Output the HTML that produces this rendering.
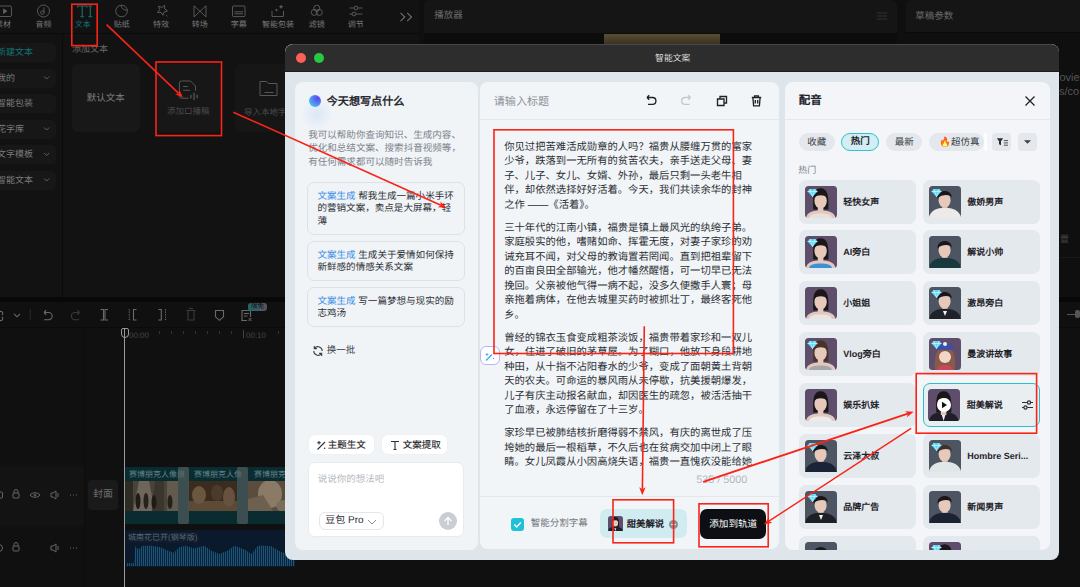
<!DOCTYPE html>
<html lang="zh-CN"><head><meta charset="utf-8">
<style>
*{box-sizing:border-box;margin:0;padding:0}
body{width:1080px;height:587px;overflow:hidden;background:#0f0f0f;position:relative;font-family:"Liberation Sans",sans-serif;text-rendering:geometricPrecision}
.a{position:absolute}
.bgt{color:#6e6e6e;font-size:9px;white-space:nowrap}
.tb{position:absolute;top:18.5px;font-size:8px;line-height:12px;color:#7a7a7a;transform:translateX(-50%);white-space:nowrap}
.sb{position:absolute;left:0;width:56px;height:19px;background:#171717;border-radius:0 5px 5px 0;font-size:9px;color:#7c7c7c;line-height:19px;white-space:nowrap;text-indent:-3px;overflow:hidden}
.sb i{position:absolute;right:9px;top:0;font-style:normal;font-size:8px}
.sug{left:22px;width:158px;border:1px solid #dde1e6;border-radius:7px;padding:7.8px 0 0 9.3px;font-size:9.55px;line-height:12.6px;color:#2b2f36;white-space:nowrap}
.bl{color:#3a8ee6}
.chip{height:19px;background:#fff;border-radius:6px;font-size:9.5px;color:#1f2329;-webkit-text-stroke:.12px #1f2329;box-shadow:0 0 2px rgba(0,0,0,.04)}
.chip span{position:absolute;top:5px;line-height:12px;white-space:nowrap}
.txt{width:252px;font-size:10.34px;line-height:14.5px;color:#2b2f36}
.txt p{margin-bottom:8.6px}
.pill{top:50.5px;height:18.3px;background:#e4e8ec;border-radius:9px;font-size:9.5px;color:#3a3f47;text-align:center;line-height:19.8px;white-space:nowrap}
.card{width:117.3px;height:44px;background:#e4e9ed;border-radius:7px}
.card.sel{background:#e9eef1;border:1.5px solid #26c0d0}
.card .av{position:absolute;left:6px;top:6px;width:32px;height:32px}
.card.sel .av{left:4.5px;top:4.5px}
.nm{position:absolute;left:44.6px;top:16px;font-size:9px;font-weight:bold;color:#1f2329;line-height:12px;white-space:nowrap}
.card.sel .nm{left:43.1px;top:14.5px}
</style></head><body>
<!-- ============ BACKGROUND APP ============ -->
<div class="a" style="left:0;top:0;width:419px;height:297px;background:#121212"></div>
<div class="a" style="left:0;top:33px;width:419px;height:1px;background:#0a0a0a"></div>
<div class="a" style="left:62px;top:34px;width:1px;height:263px;background:#0b0b0b"></div>
<div class="a" style="left:424px;top:0;width:473px;height:33px;background:#151515;border-radius:6px 6px 0 0"></div>
<div class="a" style="left:424px;top:33px;width:473px;height:11px;background:#0c0c0c"></div>
<div class="a" style="left:906px;top:0;width:174px;height:297px;background:#0f0f0f;border-radius:6px 0 0 0"></div>
<div class="a" style="left:906px;top:0;width:174px;height:32px;background:#151515;border-radius:6px 0 0 0"></div>
<div class="a" style="left:906px;top:32px;width:174px;height:1px;background:#0a0a0a"></div>
<div class="a" style="left:604px;top:34px;width:116px;height:10px;background:linear-gradient(#5a4d33,#3a3222)"></div>
<!-- toolbar labels -->
<div class="tb" style="left:3px">素材</div>
<div class="tb" style="left:43.6px">音频</div>
<div class="tb" style="left:82.8px;color:#137178">文本</div>
<div class="tb" style="left:121.7px">贴纸</div>
<div class="tb" style="left:161px">特效</div>
<div class="tb" style="left:199.8px">转场</div>
<div class="tb" style="left:238.7px">字幕</div>
<div class="tb" style="left:277.9px">智能包装</div>
<div class="tb" style="left:316.8px">滤镜</div>
<div class="tb" style="left:355.7px">调节</div>
<svg class="a" style="left:0;top:0" width="420" height="26" fill="none" stroke="#606060" stroke-width="0.9">
  <rect x="-2" y="6" width="13.5" height="10.5" rx="1.5"/><path d="M3.5 9l3.5 2.2-3.5 2.2z" fill="#606060"/>
  <circle cx="43.5" cy="11" r="6"/><circle cx="42.3" cy="12.6" r="1.7"/><path d="M44 12.6V7.3"/>
  <path d="M77.5 7.5V6h9.5v1.5M82.2 6v10.8M80.3 16.8h3.8M88.3 6h4M90.3 6v10.8M88.3 16.8h4" stroke="#137178" stroke-width="1.1"/>
  <path d="M127.3 10.2A5.8 5.8 0 1 1 121.2 5.2M121.2 5.2c0 3 2.5 5 6.1 5M121.2 5.2a5.8 5.8 0 0 1 6.1 5"/>
  <path d="M158.5 6.2l3.3 1.2 2.8-2 .1 3.5 2.8 2.1-3.4 1 -1.1 3.3-2-2.9-3.5.1 2.1-2.8z"/><path d="M166.2 15l1.3 1.3"/>
  <path d="M194 5.8L206 16.9V5.8L194 16.9z"/>
  <rect x="232.5" y="6" width="12.5" height="10.6" rx="1"/><path d="M234.5 11.8h8.5M234.5 13.8h8.5"/>
  <path d="M272 11v5.5h11.5V11"/><path d="M281 4.5l.7 1.6 1.6.7-1.6.7-.7 1.6-.7-1.6-1.6-.7 1.6-.7zM276.5 8.5l.5 1.1 1.1.5-1.1.5-.5 1.1-.5-1.1-1.1-.5 1.1-.5z" fill="#606060" stroke="none"/>
  <circle cx="316.8" cy="8.2" r="3"/><circle cx="314.3" cy="12.4" r="3"/><circle cx="319.3" cy="12.4" r="3"/>
  <path d="M349.5 8h4.5M358 8h4.5M349.5 14h2.5M356 14h6.5"/><circle cx="356" cy="8" r="1.9"/><circle cx="354" cy="14" r="1.9"/>
  <path d="M400.5 12.8l4.3 4.2-4.3 4.2M407.2 12.8l4.3 4.2-4.3 4.2" stroke="#6e6e6e" stroke-width="1.1"/>
</svg>
<!-- sidebar -->
<div class="sb" style="top:43px;color:#137178">新建文本</div>
<div class="sb" style="top:68.5px">我的</div>
<div class="sb" style="top:94px">智能包装</div>
<div class="sb" style="top:119.5px">花字库</div>
<div class="sb" style="top:145px">文字模板</div>
<div class="sb" style="top:170.5px">智能文本</div>
<svg class="a" style="left:43px;top:74px" width="8" height="120" fill="none" stroke="#6a6a6a" stroke-width="0.9"><path d="M1.2 2.5l2.5 2.5 2.5-2.5M1.2 53.5l2.5 2.5 2.5-2.5M1.2 79l2.5 2.5 2.5-2.5M1.2 104.5l2.5 2.5 2.5-2.5"/></svg>
<div class="a bgt" style="left:72px;top:41.5px;font-size:9px;color:#6a6a6a">添加文本</div>
<div class="a" style="left:72px;top:64px;width:67.5px;height:68px;background:#181818;border-radius:6px"></div>
<div class="a bgt" style="left:72px;top:90px;width:67.5px;text-align:center;font-size:9.5px;color:#7e7e7e">默认文本</div>
<div class="a" style="left:155.5px;top:64px;width:65.5px;height:68px;background:#171717;border-radius:6px"></div>
<div class="a bgt" style="left:155.5px;top:104.7px;width:65.5px;text-align:center;font-size:8.5px;color:#4a4a4a">添加口播稿</div>
<div class="a" style="left:234.5px;top:64px;width:60px;height:68px;background:#161616;border-radius:6px"></div>
<div class="a bgt" style="left:244px;top:105.5px;font-size:8.5px;color:#4a4a4a">导入本地字幕</div>
<svg class="a" style="left:150px;top:75px" width="140" height="30" fill="none" stroke="#575757" stroke-width="1">
  <path d="M38.7 23.2H31.4a2 2 0 0 1-2-2V8a2 2 0 0 1 2-2H40.5L45.5 11V15.7M33.2 11.5h4.7M33.2 15.3h6.8"/><path d="M40.9 19.8v3.4M44 17.8v7.3M47.1 19.8v3.4" stroke-width="1.3"/>
  <path d="M110 6.5h6.5l2 2h8.5v12h-17zM114.5 17.5h9"/>
</svg>
<!-- timeline -->
<div class="a" style="left:0;top:297px;width:1080px;height:5px;background:#080808"></div>
<div class="a" style="left:0;top:302px;width:1080px;height:285px;background:#101010"></div>
<div class="a" style="left:0;top:327px;width:1080px;height:1px;background:#0b0b0b"></div>
<div class="a" style="left:84px;top:328px;width:1px;height:259px;background:#0c0c0c"></div>
<div class="a" style="left:0;top:466px;width:84px;height:60px;background:#131313"></div>
<svg class="a" style="left:0;top:302px" width="290" height="26" fill="none" stroke="#6a6a6a" stroke-width="1.1">
  <path d="M-1 10.5a2 2 0 1 1 3 2.5M-1 17.5a2 2 0 1 0 3-2.5"/>
  <path d="M14 11.8l3 3 3-3"/><path d="M30.3 6.7v11.6" stroke="#262626"/>
  <path d="M44 10.5h4.6a3.6 3.6 0 0 1 0 7.2h-4.4M44 10.5l2.2-2.3M44 10.5l2.2 2.3"/>
  <path d="M79.5 10.5h-4.6a3.6 3.6 0 0 0 0 7.2h4.4M79.5 10.5l-2.2-2.3M79.5 10.5l-2.2 2.3" stroke="#3a3a3a"/>
  <path d="M100.5 7.5h3v10.5h-3M108 7.5h-3v10.5h3"/>
  <path d="M129.3 7.2v11.5" stroke-dasharray="1.2 1.2"/><path d="M136.5 7.5h-3v10.5h3"/>
  <path d="M158.3 7.5h3v10.5h-3"/><path d="M165.5 7.2v11.5" stroke-dasharray="1.2 1.2"/>
  <path d="M186.5 8.5h9M188 8.5v9.5h6V8.5M189 6.5h4" stroke="#3c3c3c"/>
  <path d="M215.5 8.5h8v6.3l-4 3.5-4-3.5z"/>
  <path d="M250.5 15V8.5h-8.5v10h5M244 11.5h5M244 14h3.5"/><path d="M248.5 16l3 3M251.5 16l-3 3" stroke-width="1"/>
</svg>
<div class="a" style="left:248px;top:302.5px;width:19px;height:8px;border-radius:3px;background:linear-gradient(90deg,#1f6670,#5b5060);font-size:6.5px;color:#111;line-height:8px;text-align:center">限免</div>
<div class="a" style="left:124px;top:328px;width:1px;height:259px;background:#9a9a9a"></div>
<div class="a" style="left:120.5px;top:328px;width:8px;height:10px;border:1.2px solid #9a9a9a;border-radius:2px 2px 4px 4px"></div>
<div class="a bgt" style="left:129px;top:330.5px;font-size:8px;color:#474747">00:00</div>
<svg class="a" style="left:150px;top:329px" width="140" height="8" stroke="#333" stroke-width="1"><path d="M9.5 2v3M21.5 2v3M33.5 2v3M45.5 2v3M57.5 2v3M69.5 2v3M81.5 2v3M128.5 2v3"/></svg>
<div class="a bgt" style="left:246px;top:330.5px;font-size:8px;color:#474747">00:10</div>
<div class="a" style="left:243px;top:330px;width:1px;height:8px;background:#444"></div>
<!-- track header icons -->
<svg class="a" style="left:0;top:485px" width="90" height="75" fill="none" stroke="#666" stroke-width="1">
  <rect x="-5" y="7" width="7.5" height="6" rx="1"/><circle cx="-1" cy="63" r="3.5"/>
  <rect x="13" y="8" width="6" height="5" rx="1"/><path d="M14 8V6.5a2 2 0 0 1 4 0V8"/>
  <path d="M30 10c2-3 8-3 10 0-2 3-8 3-10 0z"/><circle cx="35" cy="10" r="1"/>
  <path d="M51 8h2l3-2v8l-3-2h-2z M58 8v4"/>
  <path d="M70 10h1M73 10h1M76 10h1"/>
  <rect x="13" y="61" width="6" height="5" rx="1"/><path d="M14 61v-1.5a2 2 0 0 1 4 0V61"/>
  <path d="M51 61h2l3-2v8l-3-2h-2z M58 61v4"/>
  <path d="M70 63h1M73 63h1M76 63h1"/>
</svg>
<div class="a" style="left:88px;top:480px;width:30px;height:30px;background:#1a1a1a;border-radius:4px;color:#6e6e6e;font-size:10px;line-height:30px;text-align:center">封面</div>
<!-- video track -->
<div class="a" style="left:125px;top:467px;width:170px;height:57px;background:#0a2c31"></div>
<svg class="a" style="left:125px;top:481px" width="170" height="30">
  <rect width="53" height="30" fill="#4a4338"/>
  <path d="M0 0h8v30H0z" fill="#2e2a24"/><path d="M14 0h10l6 30H8z" fill="#6e665a"/><path d="M30 0h9v30h-12z" fill="#3a352d"/><path d="M42 0h11v30H42z" fill="#625a4e"/>
  <ellipse cx="13" cy="20" rx="2.5" ry="8" fill="#1f1c18"/><ellipse cx="21" cy="20" rx="2.5" ry="8" fill="#26221d"/><ellipse cx="29" cy="21" rx="2.5" ry="7" fill="#1e1b17"/><ellipse cx="45" cy="21" rx="2.5" ry="7" fill="#24211c"/>
  <rect x="63" width="49" height="30" fill="#3a2c1f"/>
  <path d="M63 20h49v10H63z" fill="#5c4a36"/><ellipse cx="74" cy="14" rx="7" ry="9" fill="#6b5640"/><ellipse cx="92" cy="12" rx="6" ry="8" fill="#4b3b2b"/><ellipse cx="104" cy="16" rx="6" ry="10" fill="#66523e"/>
  <rect x="123" width="47" height="30" fill="#5a4d3e"/>
  <ellipse cx="145" cy="13" rx="12" ry="14" fill="#8a7a66"/><path d="M123 18l15-4 10 16h-25z" fill="#6e604e"/><ellipse cx="160" cy="25" rx="9" ry="6" fill="#7a6d5b"/>
</svg>
<div class="a" style="left:178px;top:467px;width:10.5px;height:56.5px;background:rgba(70,84,86,.75);border-radius:2px"></div>
<div class="a" style="left:237px;top:467px;width:11px;height:56.5px;background:rgba(70,84,86,.75);border-radius:2px"></div>
<div class="a bgt" style="left:129px;top:468.5px;font-size:8px;color:#5f8287">赛博朋克人像摄</div>
<div class="a bgt" style="left:194px;top:468.5px;font-size:8px;color:#5f8287">赛博朋克人像</div>
<div class="a bgt" style="left:254px;top:468.5px;font-size:8px;color:#5f8287">赛博朋克</div>
<div class="a" style="left:178px;top:467px;width:10.5px;height:56.5px;background:rgba(70,84,86,.45);border-radius:2px"></div>
<div class="a" style="left:237px;top:467px;width:11px;height:56.5px;background:rgba(70,84,86,.45);border-radius:2px"></div>
<div class="a" style="left:125px;top:530px;width:170px;height:36.5px;background:#0a1a2c"></div>
<div class="a" style="left:126.5px;top:532px;width:72.5px;height:10.5px;background:#101c2b;border-radius:2px"></div>
<div class="a bgt" style="left:128px;top:531.5px;font-size:8px;line-height:12px;color:#5c6876">城南花已开(钢琴版)</div>
<div class="a" style="left:127px;top:544px;width:168px;height:22px;background:repeating-linear-gradient(90deg,#1a5478 0 1px,#0d2236 1px 2px);clip-path:polygon(0 100%,0 88%,4% 88%,5% 10%,7% 25%,9% 8%,15% 8%,20% 15%,24% 30%,28% 40%,31% 15%,35% 8%,40% 20%,46% 8%,50% 30%,55% 45%,60% 30%,64% 8%,70% 25%,74% 45%,78% 8%,82% 8%,86% 10%,90% 30%,95% 45%,100% 20%,100% 100%)"></div>
<!-- right misc -->
<div class="a bgt" style="left:1059.5px;top:72px;font-size:11px;line-height:13px;color:#555">ovies</div>
<div class="a bgt" style="left:1059px;top:86px;font-size:11px;line-height:13px;color:#555">s/co</div>
<div class="a bgt" style="left:1060px;top:232px;font-size:9px;color:#444">置</div>
<div class="a" style="left:1060px;top:257px;width:20px;height:1px;background:#181818"></div>
<div class="a" style="left:1060px;top:297px;width:20px;height:1px;background:#080808"></div>
<div class="a" style="left:1067px;top:313.5px;width:13px;height:1px;background:#555"></div>
<div class="a" style="left:1075px;top:310px;width:5px;height:8px;background:#555;border-radius:2px"></div>
<div class="a bgt" style="left:434.3px;top:8px;font-size:9.5px;line-height:15px;color:#6a6a6a">播放器</div>
<div class="a bgt" style="left:915.3px;top:8.5px;font-size:9.5px;line-height:15px;color:#6a6a6a">草稿参数</div>
<svg class="a" style="left:876px;top:11px" width="12" height="10" stroke="#333" stroke-width="1"><path d="M1 2h10M1 5h10M1 8h10"/></svg>

<!-- ============ DIALOG ============ -->
<div id="dlg" class="a" style="left:285.2px;top:44px;width:774.3px;height:516px;border-radius:8px;background:#dfe6eb;overflow:hidden">
  <div class="a" style="left:0;top:0;width:775px;height:28px;background:#2d2d2d;border-bottom:1px solid #1c1c1c;border-top:1px solid #474747;border-radius:8px 8px 0 0"></div>
  <div class="a" style="left:11px;top:9px;width:10px;height:10px;border-radius:50%;background:#fe5f57"></div>
  <div class="a" style="left:28.5px;top:9px;width:10px;height:10px;border-radius:50%;background:#28c840"></div>
  <div class="a" style="left:0;top:7.5px;width:775px;text-align:center;color:#dcdcdc;font-size:8.8px;line-height:12px">智能文案</div>



  <!-- RIGHT PANEL -->
  <div class="a" style="left:500px;top:38px;width:265px;height:468px;background:#f3f5f8;border-radius:8px;overflow:hidden">
    <div class="a" style="left:13.5px;top:11.5px;font-size:11.5px;font-weight:bold;color:#1f2329;line-height:14px;white-space:nowrap">配音</div>
    <svg class="a" style="left:239px;top:12.5px" width="12" height="12" fill="none" stroke="#1f2329" stroke-width="1.3"><path d="M1.5 1.5l9 9M10.5 1.5l-9 9"/></svg>
    <div class="a" style="left:0;top:36.5px;width:265px;height:1px;background:#e4e8ec"></div>
    <div class="a pill" style="left:13.5px;width:36px">收藏</div>
    <div class="a pill" style="left:56px;width:38px;background:#d3eef2;border:1.2px solid #2cc3cf;line-height:16px;font-weight:bold;color:#1f2329">热门</div>
    <div class="a pill" style="left:101px;width:36px">最新</div>
    <div class="a pill" style="left:144px;width:55px;padding-left:10px;text-align:left">🔥超仿真</div>
    <div class="a" style="left:198.5px;top:50.5px;width:3px;height:18.3px;background:linear-gradient(90deg,rgba(255,255,255,.6),#fff)"></div>
    <div class="a pill" style="left:207px;width:19px;border-radius:4px"></div>
    <svg class="a" style="left:210px;top:54px" width="16" height="12"><path d="M1.8 2.2h6.4L6 5.3v3.9L4 8.2V5.3z" fill="#2b2f36"/><path d="M8.8 4.6h4.2M8.8 6.9h4.2M8.8 9.2h4.2" stroke="#2b2f36" stroke-width=".8"/></svg>
    <div class="a pill" style="left:233px;width:18.5px;border-radius:4px"></div>
    <svg class="a" style="left:238px;top:57px" width="9" height="6"><path d="M1 1.2h7L4.5 4.8z" fill="#3a3f47"/></svg>
    <div class="a" style="left:13px;top:81.5px;font-size:9px;color:#7b8088;line-height:12px;white-space:nowrap">热门</div>
    <div class="a card" style="left:13.4px;top:97.5px"><div class="av"><svg width="32" height="32" viewBox="0 0 32 32"><rect width="32" height="32" rx="3.5" fill="#5e4e6c"/><path d="M8.3 23.5 C7.5 10 8.5 2.2 15.6 2.2 C22.7 2.2 24 10 23.3 23.5z" fill="#1b1719"/><path d="M1 32 C2 26 8 24.5 15.6 24.5 C23.2 24.5 29.5 26 30.5 32z" fill="#e2c9bd"/><path d="M4 32 C5 28.5 9 27.5 15.6 27.5 C22 27.5 26 28.5 27 32z" fill="#e8e0dc"/><path d="M12.8 19h5.6v7h-5.6z" fill="#e4c8bb"/><ellipse cx="15.6" cy="14.8" rx="6.2" ry="7.6" fill="#e6c9bb"/><path d="M9.5 11.5 C10 5 21 5 21.8 11.5 C19 8.5 12.5 8.5 9.5 11.5z" fill="#1b1719"/><path d="M2.5 5.5l2.2-2.5h5.6l2.2 2.5-5 5.2z" fill="#58d6f5"/><path d="M2.5 5.5h10M4.7 3l2.8 7.7L10.3 3" stroke="#e8fbff" stroke-width=".6" fill="none"/></svg></div><div class="nm">轻快女声</div></div>
    <div class="a card" style="left:137.4px;top:97.5px"><div class="av"><svg width="32" height="32" viewBox="0 0 32 32"><rect width="32" height="32" rx="3.5" fill="#4d5562"/><path d="M13.2 18h5.4v6h-5.4z" fill="#cfae98"/><path d="M0 32 C1 24.5 8 21.8 15.8 21.8 C23.6 21.8 31 24.5 32 32z" fill="#ecebea"/><ellipse cx="15.6" cy="14.2" rx="6" ry="7.6" fill="#e6c9bb"/><path d="M8.6 12.5 C7.5 3.5 22.5 2 22.8 11.5 C21 8.3 13 8 8.6 12.5z" fill="#1b1719"/><path d="M2.5 5.5l2.2-2.5h5.6l2.2 2.5-5 5.2z" fill="#58d6f5"/><path d="M2.5 5.5h10M4.7 3l2.8 7.7L10.3 3" stroke="#e8fbff" stroke-width=".6" fill="none"/></svg></div><div class="nm">傲娇男声</div></div>
    <div class="a card" style="left:13.4px;top:148.4px"><div class="av"><svg width="32" height="32" viewBox="0 0 32 32"><rect width="32" height="32" rx="3.5" fill="#5e4e6c"/><path d="M8.3 23.5 C7.5 10 8.5 2.2 15.6 2.2 C22.7 2.2 24 10 23.3 23.5z" fill="#1b1719"/><path d="M1 32 C2 26 8 24.5 15.6 24.5 C23.2 24.5 29.5 26 30.5 32z" fill="#e2c9bd"/><path d="M4 32 C5 28.5 9 27.5 15.6 27.5 C22 27.5 26 28.5 27 32z" fill="#3d8fd6"/><path d="M12.8 19h5.6v7h-5.6z" fill="#e4c8bb"/><ellipse cx="15.6" cy="14.8" rx="6.2" ry="7.6" fill="#e6c9bb"/><path d="M9.5 11.5 C10 5 21 5 21.8 11.5 C19 8.5 12.5 8.5 9.5 11.5z" fill="#1b1719"/><path d="M2.5 5.5l2.2-2.5h5.6l2.2 2.5-5 5.2z" fill="#58d6f5"/><path d="M2.5 5.5h10M4.7 3l2.8 7.7L10.3 3" stroke="#e8fbff" stroke-width=".6" fill="none"/></svg></div><div class="nm">AI旁白</div></div>
    <div class="a card" style="left:137.4px;top:148.4px"><div class="av"><svg width="32" height="32" viewBox="0 0 32 32"><rect width="32" height="32" rx="3.5" fill="#4d5562"/><path d="M13.2 18h5.4v6h-5.4z" fill="#cfae98"/><path d="M0 32 C1 24.5 8 21.8 15.8 21.8 C23.6 21.8 31 24.5 32 32z" fill="#183a3c"/><ellipse cx="15.6" cy="14.2" rx="6" ry="7.6" fill="#e6c9bb"/><path d="M8.6 12.5 C7.5 3.5 22.5 2 22.8 11.5 C21 8.3 13 8 8.6 12.5z" fill="#1b1719"/></svg></div><div class="nm">解说小帅</div></div>
    <div class="a card" style="left:13.4px;top:199.3px"><div class="av"><svg width="32" height="32" viewBox="0 0 32 32"><rect width="32" height="32" rx="3.5" fill="#5e4e6c"/><path d="M8.3 23.5 C7.5 10 8.5 2.2 15.6 2.2 C22.7 2.2 24 10 23.3 23.5z" fill="#1b1719"/><path d="M1 32 C2 26 8 24.5 15.6 24.5 C23.2 24.5 29.5 26 30.5 32z" fill="#e2c9bd"/><path d="M4 32 C5 28.5 9 27.5 15.6 27.5 C22 27.5 26 28.5 27 32z" fill="#ece4e0"/><path d="M12.8 19h5.6v7h-5.6z" fill="#e4c8bb"/><ellipse cx="15.6" cy="14.8" rx="6.2" ry="7.6" fill="#e6c9bb"/><path d="M9.5 11.5 C10 5 21 5 21.8 11.5 C19 8.5 12.5 8.5 9.5 11.5z" fill="#1b1719"/></svg></div><div class="nm">小姐姐</div></div>
    <div class="a card" style="left:137.4px;top:199.3px"><div class="av"><svg width="32" height="32" viewBox="0 0 32 32"><rect width="32" height="32" rx="3.5" fill="#4d5562"/><path d="M13.2 18h5.4v6h-5.4z" fill="#cfae98"/><path d="M0 32 C1 24.5 8 21.8 15.8 21.8 C23.6 21.8 31 24.5 32 32z" fill="#1f2228"/><ellipse cx="15.6" cy="14.2" rx="6" ry="7.6" fill="#e6c9bb"/><path d="M8.6 12.5 C7.5 3.5 22.5 2 22.8 11.5 C21 8.3 13 8 8.6 12.5z" fill="#1b1719"/><path d="M14 24l2 5 2-5z" fill="#f5f5f5"/><path d="M2.5 5.5l2.2-2.5h5.6l2.2 2.5-5 5.2z" fill="#58d6f5"/><path d="M2.5 5.5h10M4.7 3l2.8 7.7L10.3 3" stroke="#e8fbff" stroke-width=".6" fill="none"/></svg></div><div class="nm">激昂旁白</div></div>
    <div class="a card" style="left:13.4px;top:250.2px"><div class="av"><svg width="32" height="32" viewBox="0 0 32 32"><rect width="32" height="32" rx="3.5" fill="#5e4e6c"/><path d="M8.3 23.5 C7.5 10 8.5 2.2 15.6 2.2 C22.7 2.2 24 10 23.3 23.5z" fill="#4a3326"/><path d="M1 32 C2 26 8 24.5 15.6 24.5 C23.2 24.5 29.5 26 30.5 32z" fill="#e2c9bd"/><path d="M4 32 C5 28.5 9 27.5 15.6 27.5 C22 27.5 26 28.5 27 32z" fill="#a9a6a8"/><path d="M12.8 19h5.6v7h-5.6z" fill="#e4c8bb"/><ellipse cx="15.6" cy="14.8" rx="6.2" ry="7.6" fill="#e6c9bb"/><path d="M9.5 11.5 C10 5 21 5 21.8 11.5 C19 8.5 12.5 8.5 9.5 11.5z" fill="#4a3326"/><path d="M2.5 5.5l2.2-2.5h5.6l2.2 2.5-5 5.2z" fill="#58d6f5"/><path d="M2.5 5.5h10M4.7 3l2.8 7.7L10.3 3" stroke="#e8fbff" stroke-width=".6" fill="none"/></svg></div><div class="nm">Vlog旁白</div></div>
    <div class="a card" style="left:137.4px;top:250.2px"><div class="av"><svg width="32" height="32" viewBox="0 0 32 32"><rect width="32" height="32" rx="3.5" fill="#5e4e6c"/><path d="M6 32 C5 14 9 9 16 9 C23 9 27 14 26 32z" fill="#8a5a48"/><ellipse cx="16" cy="19" rx="6" ry="6" fill="#f2d6c8"/><path d="M7 12 C8 3 24 3 25 12z" fill="#3d4fa8"/><circle cx="16" cy="6" r="2" fill="#eef"/><path d="M8 32 C9 28 12 27 16 27 C20 27 23 28 24 32z" fill="#c8475a"/><path d="M2.5 5.5l2.2-2.5h5.6l2.2 2.5-5 5.2z" fill="#58d6f5"/><path d="M2.5 5.5h10M4.7 3l2.8 7.7L10.3 3" stroke="#e8fbff" stroke-width=".6" fill="none"/></svg></div><div class="nm">曼波讲故事</div></div>
    <div class="a card" style="left:13.4px;top:301.4px"><div class="av"><svg width="32" height="32" viewBox="0 0 32 32"><rect width="32" height="32" rx="3.5" fill="#5e4e6c"/><path d="M8.3 23.5 C7.5 10 8.5 2.2 15.6 2.2 C22.7 2.2 24 10 23.3 23.5z" fill="#1b1719"/><path d="M1 32 C2 26 8 24.5 15.6 24.5 C23.2 24.5 29.5 26 30.5 32z" fill="#e2c9bd"/><path d="M4 32 C5 28.5 9 27.5 15.6 27.5 C22 27.5 26 28.5 27 32z" fill="#f0ebe8"/><path d="M12.8 19h5.6v7h-5.6z" fill="#e4c8bb"/><ellipse cx="15.6" cy="14.8" rx="6.2" ry="7.6" fill="#e6c9bb"/><path d="M9.5 11.5 C10 5 21 5 21.8 11.5 C19 8.5 12.5 8.5 9.5 11.5z" fill="#1b1719"/></svg></div><div class="nm">娱乐扒妹</div></div>
    <div class="a card sel" style="left:137.4px;top:301.4px"><div class="av"><svg width="32" height="32" viewBox="0 0 32 32"><rect width="32" height="32" rx="3.5" fill="#5e4e6c"/><path d="M8.3 23.5 C7.5 10 8.5 2.2 15.6 2.2 C22.7 2.2 24 10 23.3 23.5z" fill="#1b1719"/><path d="M1 32 C2 25 8 23 15.6 23 C23.2 23 29.5 25 30.5 32z" fill="#1d1f2a"/><path d="M13.4 24.5l2.2 7.5 2.2-7.5z" fill="#f0f0f0"/><path d="M12.8 19h5.6v7h-5.6z" fill="#e4c8bb"/><ellipse cx="15.6" cy="14.8" rx="6.2" ry="7.6" fill="#e6c9bb"/><path d="M9.5 11.5 C10 5 21 5 21.8 11.5 C19 8.5 12.5 8.5 9.5 11.5z" fill="#1b1719"/><circle cx="16" cy="16" r="7" fill="#fff"/><path d="M14 12.8v6.4l5-3.2z" fill="#111"/></svg></div><div class="nm">甜美解说</div><svg class="a" style="left:97px;top:15px" width="13" height="12" fill="none" stroke="#2b2f36" stroke-width="1.2"><path d="M1 3.5h11M1 8.5h11"/><circle cx="8" cy="3.5" r="1.6" fill="#e9eef1"/><circle cx="4.5" cy="8.5" r="1.6" fill="#e9eef1"/></svg></div>
    <div class="a card" style="left:13.4px;top:352.4px"><div class="av"><svg width="32" height="32" viewBox="0 0 32 32"><rect width="32" height="32" rx="3.5" fill="#4d5562"/><path d="M13.2 18h5.4v6h-5.4z" fill="#cfae98"/><path d="M0 32 C1 24.5 8 21.8 15.8 21.8 C23.6 21.8 31 24.5 32 32z" fill="#1a2436"/><ellipse cx="15.6" cy="14.2" rx="6" ry="7.6" fill="#e6c9bb"/><path d="M8.6 12.5 C7.5 3.5 22.5 2 22.8 11.5 C21 8.3 13 8 8.6 12.5z" fill="#1b1719"/><path d="M2.5 5.5l2.2-2.5h5.6l2.2 2.5-5 5.2z" fill="#58d6f5"/><path d="M2.5 5.5h10M4.7 3l2.8 7.7L10.3 3" stroke="#e8fbff" stroke-width=".6" fill="none"/></svg></div><div class="nm">云泽大叔</div></div>
    <div class="a card" style="left:137.4px;top:352.4px"><div class="av"><svg width="32" height="32" viewBox="0 0 32 32"><rect width="32" height="32" rx="3.5" fill="#4d5562"/><path d="M13.2 18h5.4v6h-5.4z" fill="#cfae98"/><path d="M0 32 C1 24.5 8 21.8 15.8 21.8 C23.6 21.8 31 24.5 32 32z" fill="#dfe8e6"/><ellipse cx="15.6" cy="14.2" rx="6" ry="7.6" fill="#e6c9bb"/><path d="M8.6 12.5 C7.5 3.5 22.5 2 22.8 11.5 C21 8.3 13 8 8.6 12.5z" fill="#3b3129"/><path d="M2.5 5.5l2.2-2.5h5.6l2.2 2.5-5 5.2z" fill="#58d6f5"/><path d="M2.5 5.5h10M4.7 3l2.8 7.7L10.3 3" stroke="#e8fbff" stroke-width=".6" fill="none"/></svg></div><div class="nm">Hombre Seri...</div></div>
    <div class="a card" style="left:13.4px;top:403.3px"><div class="av"><svg width="32" height="32" viewBox="0 0 32 32"><rect width="32" height="32" rx="3.5" fill="#4d5562"/><path d="M13.2 18h5.4v6h-5.4z" fill="#cfae98"/><path d="M0 32 C1 24.5 8 21.8 15.8 21.8 C23.6 21.8 31 24.5 32 32z" fill="#1e2027"/><ellipse cx="15.6" cy="14.2" rx="6" ry="7.6" fill="#e6c9bb"/><path d="M8.6 12.5 C7.5 3.5 22.5 2 22.8 11.5 C21 8.3 13 8 8.6 12.5z" fill="#1b1719"/><path d="M14 24l2 5 2-5z" fill="#f5f5f5"/><path d="M2.5 5.5l2.2-2.5h5.6l2.2 2.5-5 5.2z" fill="#58d6f5"/><path d="M2.5 5.5h10M4.7 3l2.8 7.7L10.3 3" stroke="#e8fbff" stroke-width=".6" fill="none"/></svg></div><div class="nm">品牌广告</div></div>
    <div class="a card" style="left:137.4px;top:403.3px"><div class="av"><svg width="32" height="32" viewBox="0 0 32 32"><rect width="32" height="32" rx="3.5" fill="#4d5562"/><path d="M13.2 18h5.4v6h-5.4z" fill="#cfae98"/><path d="M0 32 C1 24.5 8 21.8 15.8 21.8 C23.6 21.8 31 24.5 32 32z" fill="#1b2333"/><ellipse cx="15.6" cy="14.2" rx="6" ry="7.6" fill="#e6c9bb"/><path d="M8.6 12.5 C7.5 3.5 22.5 2 22.8 11.5 C21 8.3 13 8 8.6 12.5z" fill="#1b1719"/></svg></div><div class="nm">新闻男声</div></div>
    <div class="a card" style="left:13.4px;top:454.1px"><div class="av"><svg width="32" height="32" viewBox="0 0 32 32"><rect width="32" height="32" rx="3.5" fill="#4d5562"/><path d="M13.2 18h5.4v6h-5.4z" fill="#cfae98"/><path d="M0 32 C1 24.5 8 21.8 15.8 21.8 C23.6 21.8 31 24.5 32 32z" fill="#1b2333"/><ellipse cx="15.6" cy="14.2" rx="6" ry="7.6" fill="#e6c9bb"/><path d="M8.6 12.5 C7.5 3.5 22.5 2 22.8 11.5 C21 8.3 13 8 8.6 12.5z" fill="#1b1719"/></svg></div><div class="nm"></div></div>
    <div class="a card" style="left:137.4px;top:454.1px"><div class="av"><svg width="32" height="32" viewBox="0 0 32 32"><rect width="32" height="32" rx="3.5" fill="#5e4e6c"/><path d="M8.3 23.5 C7.5 10 8.5 2.2 15.6 2.2 C22.7 2.2 24 10 23.3 23.5z" fill="#1b1719"/><path d="M1 32 C2 26 8 24.5 15.6 24.5 C23.2 24.5 29.5 26 30.5 32z" fill="#e2c9bd"/><path d="M4 32 C5 28.5 9 27.5 15.6 27.5 C22 27.5 26 28.5 27 32z" fill="#ddd"/><path d="M12.8 19h5.6v7h-5.6z" fill="#e4c8bb"/><ellipse cx="15.6" cy="14.8" rx="6.2" ry="7.6" fill="#e6c9bb"/><path d="M9.5 11.5 C10 5 21 5 21.8 11.5 C19 8.5 12.5 8.5 9.5 11.5z" fill="#1b1719"/><path d="M2.5 5.5l2.2-2.5h5.6l2.2 2.5-5 5.2z" fill="#58d6f5"/><path d="M2.5 5.5h10M4.7 3l2.8 7.7L10.3 3" stroke="#e8fbff" stroke-width=".6" fill="none"/></svg></div><div class="nm"></div></div>
  </div>
  <!-- MIDDLE PANEL -->
  <div class="a" style="left:195px;top:38px;width:299px;height:467px;background:#f2f5f7;border-radius:8px;overflow:hidden">
    <div class="a" style="left:0;top:37px;width:299px;height:1px;background:#e3e7eb"></div>
    <div class="a" style="left:13.5px;top:12.5px;font-size:11.1px;color:#8d9299;line-height:14px;white-space:nowrap">请输入标题</div>
    <svg class="a" style="left:160px;top:11px" width="125" height="16" fill="none" stroke="#1f2329" stroke-width="1.35">
      <path d="M7 4.5h5.5a3.4 3.4 0 0 1 0 6.8H8M7 4.5l2.2-2.2M7 4.5l2.2 2.2"/>
      <path d="M50.5 4.5H45a3.4 3.4 0 0 0 0 6.8h4.5M50.5 4.5l-2.2-2.2M50.5 4.5l-2.2 2.2" stroke="#c4c8cd"/>
      <path d="M77.5 6h6.5v6.5h-6.5zM80 6V3.5h6.5V10H84"/>
      <path d="M111.8 4.5h9.4M114.6 4.5V2.8h3.8v1.7M112.9 4.5l.7 8.3h5.8l.7-8.3M115.3 7v3.6M117.7 7v3.6"/>
    </svg>
    <div class="a txt" style="left:24px;top:58.7px">
      <p>你见过把苦难活成勋章的人吗？福贵从腰缠万贯的富家少爷，跌落到一无所有的贫苦农夫，亲手送走父母、妻子、儿子、女儿、女婿、外孙，最后只剩一头老牛相伴，却依然选择好好活着。今天，我们共读余华的封神之作 ——《活着》。</p>
      <p>三十年代的江南小镇，福贵是镇上最风光的纨绔子弟。家庭殷实的他，嗜赌如命、挥霍无度，对妻子家珍的劝诫充耳不闻，对父母的教诲置若罔闻。直到把祖辈留下的百亩良田全部输光，他才幡然醒悟，可一切早已无法挽回。父亲被他气得一病不起，没多久便撒手人寰；母亲拖着病体，在他去城里买药时被抓壮丁，最终客死他乡。</p>
      <p>曾经的锦衣玉食变成粗茶淡饭，福贵带着家珍和一双儿女，住进了破旧的茅草屋。为了糊口，他放下身段耕地种田，从十指不沾阳春水的少爷，变成了面朝黄土背朝天的农夫。可命运的暴风雨从未停歇，抗美援朝爆发，儿子有庆主动报名献血，却因医生的疏忽，被活活抽干了血液，永远停留在了十三岁。</p>
      <p>家珍早已被肺结核折磨得弱不禁风，有庆的离世成了压垮她的最后一根稻草，不久后也在贫病交加中闭上了眼睛。女儿凤霞从小因高烧失语，福贵一直愧疚没能给她</p>
    </div>
    <div class="a" style="left:0;top:386px;width:299px;height:28px;background:linear-gradient(rgba(242,245,247,0),#f2f5f7 45%)"></div>
    <div class="a" style="right:32px;top:391.5px;font-size:10.8px;color:#b5b9bf;line-height:12px;white-space:nowrap">535 / 5000</div>
    <div class="a" style="left:0;top:413.5px;width:299px;height:1px;background:#e3e7eb"></div>
    <div class="a" style="left:31px;top:435.5px;width:13px;height:13px;border-radius:3px;background:#20c0d8"></div>
    <svg class="a" style="left:31px;top:435.5px" width="13" height="13" fill="none" stroke="#fff" stroke-width="1.4"><path d="M3.3 6.6l2.3 2.3 4.2-4.4"/></svg>
    <div class="a" style="left:50.5px;top:436px;font-size:9.5px;color:#6f757d;line-height:12px;white-space:nowrap">智能分割字幕</div>
    <div class="a" style="left:120px;top:427px;width:86.5px;height:29px;border-radius:7px;background:#d1ecf1"></div>
    <svg class="a" style="left:128px;top:434px" width="15" height="15" viewBox="0 0 32 32"><rect width="32" height="32" rx="6" fill="#5e4e6c"/><path d="M8.3 24 C7.5 10 8.5 2.2 15.6 2.2 C22.7 2.2 24 10 23.3 24z" fill="#1b1719"/><path d="M0 32 C1 25 8 23 15.6 23 C23.2 23 31 25 32 32z" fill="#1d1f2a"/><path d="M13.5 26l2.1 6 2.1-6z" fill="#eee"/><ellipse cx="15.6" cy="15" rx="6" ry="7.5" fill="#e6c9bb"/><path d="M9.5 11.5 C10 5 21 5 21.8 11.5 C19 8.5 12.5 8.5 9.5 11.5z" fill="#1b1719"/></svg>
    <div class="a" style="left:146.5px;top:436px;font-size:9.4px;font-weight:bold;color:#1f2329;line-height:12px;white-space:nowrap">甜美解说</div>
    <div class="a" style="left:189px;top:437.5px;width:9px;height:9px;border-radius:50%;background:#8a9095"></div>
    <div class="a" style="left:191px;top:441.5px;width:5px;height:1px;background:#d1ecf1"></div>
    <div class="a" style="left:220px;top:426.5px;width:66px;height:30px;border-radius:7px;background:#0d0f14"></div>
    <div class="a" style="left:220px;top:435.5px;width:66px;text-align:center;font-size:9.6px;color:#fff;line-height:13px;white-space:nowrap">添加到轨道</div>
  </div>
  <div class="a" style="left:195px;top:301.5px;width:19.5px;height:19.5px;border-radius:6px;background:#fff;border:1px solid #b8b4fb"></div>
  <svg class="a" style="left:199px;top:305.5px" width="12" height="12" fill="none" stroke-linecap="round"><path d="M2.5 10l5-5" stroke="#3fb7f0" stroke-width="1.6"/><path d="M3 3.5v2M2 4.5h2" stroke="#5a9cf2" stroke-width=".9"/><circle cx="9.5" cy="8.5" r=".7" fill="#8a7cf5"/></svg>
  <!-- LEFT PANEL -->
  <div class="a" style="left:9.5px;top:38px;width:183.5px;height:468px;background:#f1f4f7;border-radius:8px"></div>
  <div class="a" style="left:14px;top:52px;width:36px;height:36px;border-radius:50%;background:radial-gradient(circle,rgba(190,215,245,.45),rgba(190,215,245,0) 65%)"></div>
  <div class="a" style="left:23.5px;top:51px;width:12px;height:12px;border-radius:50%;background:radial-gradient(circle at 72% 30%,#5a48ee 0,#5a6cf3 30%,#45b5f0 70%,rgba(150,230,250,.6) 100%);filter:blur(.4px)"></div>
  <div class="a" style="left:41.5px;top:50.8px;font-size:11.1px;color:#1f2329;-webkit-text-stroke:.45px #1f2329;line-height:14px;white-space:nowrap">今天想写点什么</div>
  <div class="a" style="left:23px;top:84.5px;width:160px;font-size:9.55px;color:#7d838c;line-height:13.9px">我可以帮助你查询知识、生成内容、<br>优化和总结文案、搜索抖音视频等，<br>有任何需求都可以随时告诉我</div>
  <div class="a sug" style="top:138px;height:52.5px">
    <span class="bl">文案生成</span> 帮我生成一篇小米手环<br>的营销文案，卖点是大屏幕，轻<br>薄</div>
  <div class="a sug" style="top:197px;height:39.5px">
    <span class="bl">文案生成</span> 生成关于爱情如何保持<br>新鲜感的情感关系文案</div>
  <div class="a sug" style="top:243px;height:39.5px">
    <span class="bl">文案生成</span> 写一篇梦想与现实的励<br>志鸡汤</div>
  <svg class="a" style="left:26.5px;top:300.5px" width="12" height="12" fill="none" stroke="#3a3f47" stroke-width="1.1"><path d="M10.2 6A4.3 4.3 0 0 0 2.6 3.2M1.8 6a4.3 4.3 0 0 0 7.6 2.8"/><path d="M2.3 1v2.6h2.6M9.7 11V8.4H7.1"/></svg>
  <div class="a" style="left:41.5px;top:301px;font-size:9.5px;color:#3a3f47;line-height:12px;white-space:nowrap">换一批</div>
  <div class="a chip" style="left:23.5px;top:391px;width:65px">
    <svg width="12" height="11" fill="none" stroke="#2b2f36" stroke-width="1.1" style="position:absolute;left:7px;top:4.5px"><path d="M1.5 9.5l7.5-7.5M3 1v3.6M1.2 2.8h3.6"/><circle cx="8.6" cy="8.2" r=".8" fill="#2b2f36" stroke="none"/></svg>
    <span style="left:19px">主题生文</span></div>
  <div class="a chip" style="left:96.5px;top:391px;width:65.5px">
    <svg width="11" height="10" fill="none" stroke="#2b2f36" stroke-width="1.1" style="position:absolute;left:8px;top:4.5px"><path d="M1 1.5h8M5 1.5v8M3.5 9.5h3"/></svg>
    <span style="left:21px">文案提取</span></div>
  <div class="a" style="left:23px;top:417.8px;width:156px;height:75.2px;background:#fff;border-radius:7px;border:1px solid #e9ecef"></div>
  <div class="a" style="left:32.5px;top:429.5px;font-size:9.5px;color:#b4b8be;line-height:12px;white-space:nowrap">说说你的想法吧</div>
  <div class="a" style="left:33.5px;top:467.5px;width:65.5px;height:18.5px;border:1px solid #e3e6ea;border-radius:6px;background:#fff"></div>
  <div class="a" style="left:40px;top:471.3px;font-size:10px;color:#2b2f36;line-height:12px;white-space:nowrap">豆包 Pro</div>
  <svg class="a" style="left:81.5px;top:475px" width="10" height="6" fill="none" stroke="#8a8f96" stroke-width="1"><path d="M1 1l4 4 4-4"/></svg>
  <div class="a" style="left:154px;top:467.5px;width:18px;height:18px;border-radius:50%;background:#c9cdd4"></div>
  <svg class="a" style="left:157px;top:470.5px" width="12" height="12" fill="none" stroke="#fff" stroke-width="1.3"><path d="M6 10V2.5M2.5 6L6 2.5 9.5 6"/></svg>
</div>
<svg class="a" style="left:0;top:0" width="1080" height="587"><rect x="71.8" y="4.2" width="25.400000000000006" height="41.4" fill="none" stroke="#fa2318" stroke-width="1.6"/><rect x="156" y="62" width="65.5" height="73.6" fill="none" stroke="#fa2318" stroke-width="1.6"/><rect x="494" y="129.8" width="239.39999999999998" height="223.7" fill="none" stroke="#fa2318" stroke-width="1.6"/><rect x="613" y="499.8" width="60.60000000000002" height="42.99999999999994" fill="none" stroke="#fa2318" stroke-width="1.6"/><rect x="699" y="503.8" width="69.20000000000005" height="42.99999999999994" fill="none" stroke="#fa2318" stroke-width="1.6"/><rect x="916.2" y="373.6" width="120.39999999999986" height="59.599999999999966" fill="none" stroke="#fa2318" stroke-width="1.6"/><path d="M106.6 24.6L178.7 93.4" stroke="#fa2318" stroke-width="1.6"/><path d="M183.0 97.5L175.0 94.3L178.7 93.4L179.4 89.7z" fill="#fa2318"/><path d="M233.3 112.2L440.9 205.2" stroke="#fa2318" stroke-width="1.6"/><path d="M446.4 207.7L437.8 207.3L440.9 205.2L440.4 201.5z" fill="#fa2318"/><path d="M644.3 326.3L642.4 489.2" stroke="#fa2318" stroke-width="1.6"/><path d="M642.3 495.2L639.2 487.2L642.4 489.2L645.6 487.2z" fill="#fa2318"/><path d="M703.2 481.9L907.9 413.6" stroke="#fa2318" stroke-width="1.9"/><path d="M913.6 411.7L907.0 417.3L907.9 413.6L905.0 411.2z" fill="#fa2318"/><path d="M911.1 428.3L768.9 521.2" stroke="#fa2318" stroke-width="1.4"/><path d="M763.9 524.5L768.8 517.4L768.9 521.2L772.3 522.8z" fill="#fa2318"/></svg>
</body></html>
